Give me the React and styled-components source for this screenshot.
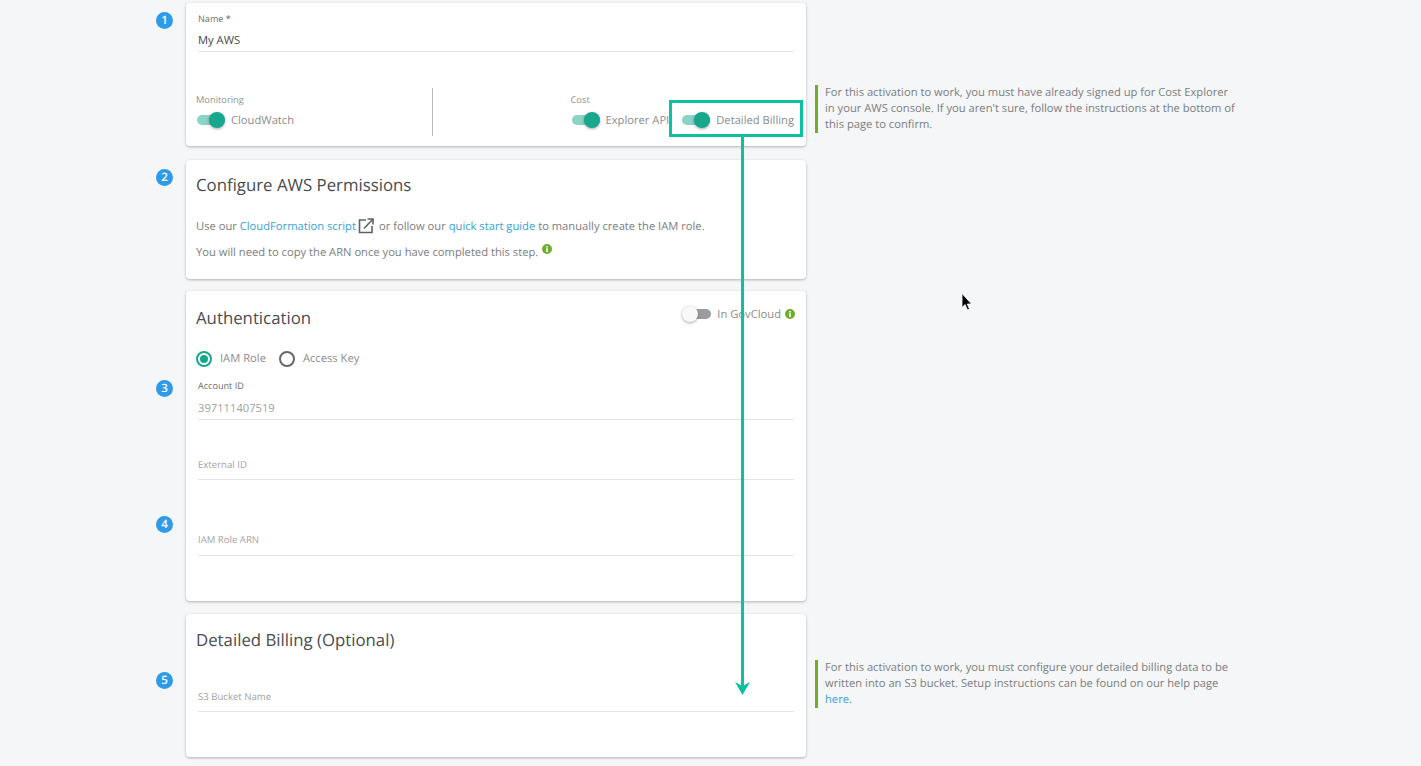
import React from "react";
import styled, { createGlobalStyle } from "styled-components";

const GlobalStyle = createGlobalStyle`
  html, body {
    margin: 0;
    padding: 0;
    background: #f5f6f8;
    font-family: "Open Sans", "Liberation Sans", sans-serif;
    color: #6f7275;
    text-rendering: geometricPrecision;
  }
  * {
    box-sizing: border-box;
  }
`;

const TEAL = "#17a78d";
const ANNOTATION = "#0cc0a2";
const BLUE = "#2f9be8";
const LINK = "#3aa3d4";
const GREEN = "#70ad2c";

const Page = styled.div`
  position: relative;
  width: 1421px;
  height: 766px;
  overflow: hidden;
  padding-top: 3px;
`;

const Step = styled.section`
  display: grid;
  grid-template-columns: 156px 30px 620px 1fr;
  height: ${({ $height }) => $height}px;
  margin-bottom: ${({ $gap }) => $gap}px;
`;

const BadgeColumn = styled.div`
  grid-column: 2;
  display: flex;
  flex-direction: column;
  align-items: flex-start;
`;

const Badge = styled.div`
  width: 17px;
  height: 17px;
  margin-top: ${({ $top }) => $top}px;
  border-radius: 50%;
  background: ${BLUE};
  color: #fff;
  font-size: 11.5px;
  font-weight: 600;
  line-height: 17px;
  text-align: center;
`;

const Card = styled.div`
  background: #fff;
  border-radius: 4px;
  box-shadow: 0 1px 3px rgba(0, 0, 0, 0.28);
  padding: ${({ $top }) => $top || 0}px 12px 0 10px;
  height: 100%;
`;

const Field = styled.div`
  margin-left: 2px;
  height: ${({ $height }) => $height}px;
  margin-top: ${({ $top }) => $top || 0}px;
  border-bottom: 1px solid #e4e5e7;
  display: flex;
  flex-direction: column;
  justify-content: flex-end;
`;

const FieldLabel = styled.label`
  font-size: ${({ $small }) => ($small ? 9.1 : 9.6)}px;
  line-height: 14px;
  color: ${({ $small }) => ($small ? "#6a6d70" : "#a0a2a5")};
  margin-bottom: ${({ $small, $bottom }) => $bottom || ($small ? 7 : 7)}px;
`;

const FieldValue = styled.div`
  font-size: 11.2px;
  line-height: 18px;
  margin-bottom: 1px;
  color: ${({ $muted }) => ($muted ? "#a0a2a5" : "#45484b")};
`;

const ToggleBar = styled.div`
  display: flex;
  margin-top: 36px;
  height: 48px;
`;

const ToggleGroup = styled.div`
  width: ${({ $width }) => $width}px;
  padding-left: ${({ $pad }) => $pad || 0}px;
  border-right: ${({ $divider }) => ($divider ? "1px solid #b9babc" : "none")};
`;

const GroupLabel = styled.div`
  font-size: 9.3px;
  line-height: 14px;
  margin-top: 5px;
  margin-bottom: 5px;
  color: #8f9194;
`;

const ToggleRow = styled.div`
  display: flex;
  align-items: center;
  gap: ${({ $gap }) => $gap || 0}px;
  margin-left: 1px;
`;

const ToggleItem = styled.div`
  display: flex;
  align-items: center;
  gap: 6px;
  font-size: 11.2px;
  line-height: 18px;
  color: #8b8d90;
  white-space: nowrap;
`;

const Track = styled.span`
  position: relative;
  display: block;
  width: 28px;
  height: 10px;
  margin-top: -2px;
  border-radius: 5px;
  background: ${({ $on }) => ($on ? "#8bd3c4" : "#9b9c9e")};
`;

const Knob = styled.span`
  position: absolute;
  top: -3px;
  left: ${({ $on }) => ($on ? 12 : -1)}px;
  width: 16px;
  height: 16px;
  border-radius: 50%;
  background: ${({ $on }) => ($on ? TEAL : "#f8f8f8")};
  box-shadow: 0 1px 3px rgba(0, 0, 0, 0.35);
`;

const Title = styled.h2`
  margin: 0;
  font-size: 16.8px;
  font-weight: 400;
  line-height: 24px;
  color: #484b4e;
`;

const Paragraph = styled.p`
  margin: ${({ $top }) => $top}px 0 0;
  font-size: 11.2px;
  line-height: 18px;
  color: #7b7e81;
`;

const TextLink = styled.a`
  color: ${LINK};
  text-decoration: none;
`;

const InfoDot = styled.span`
  display: inline-block;
  position: relative;
  top: ${({ $shift }) => $shift || 0}px;
  width: 10px;
  height: 10px;
  margin-left: ${({ $left }) => $left || 0}px;
  line-height: 0;
`;

const HeaderRow = styled.div`
  display: flex;
  justify-content: space-between;
  align-items: flex-start;
`;

const GovToggle = styled(ToggleItem)`
  margin-top: 0;
  margin-right: -1px;
`;

const RadioRow = styled.div`
  display: flex;
  align-items: center;
  gap: 13px;
  margin-top: 20px;
  font-size: 11.2px;
  line-height: 18px;
  color: #8b8d90;
`;

const RadioItem = styled.div`
  display: flex;
  align-items: center;
  gap: 8px;
`;

const RadioCircle = styled.span`
  display: flex;
  align-items: center;
  justify-content: center;
  width: 16px;
  height: 16px;
  border-radius: 50%;
  border: 2px solid ${({ $on }) => ($on ? TEAL : "#66686b")};

  &::after {
    content: "";
    display: ${({ $on }) => ($on ? "block" : "none")};
    width: 8px;
    height: 8px;
    border-radius: 50%;
    background: ${TEAL};
  }
`;

const Note = styled.aside`
  align-self: start;
  margin: ${({ $top }) => $top}px 0 0 9px;
  width: 425px;
  padding-left: 7px;
  border-left: 3px solid ${GREEN};
  font-size: 11.2px;
  line-height: 16px;
  color: #7b7e81;
`;

const Highlight = styled.div`
  position: absolute;
  left: 669px;
  top: 100px;
  width: 134px;
  height: 37px;
  border: 3px solid ${ANNOTATION};
`;

const Arrow = styled.svg`
  position: absolute;
  left: 733px;
  top: 136px;
`;

const Cursor = styled.svg`
  position: absolute;
  left: 960px;
  top: 292px;
`;

const Info = ({ shift, left }) => (
  <InfoDot $shift={shift} $left={left}>
    <svg width="10" height="10" viewBox="0 0 10 10">
      <circle cx="5" cy="5" r="5" fill={GREEN} />
      <rect x="4.2" y="4.2" width="1.6" height="3.8" fill="#fff" />
      <rect x="4.2" y="2" width="1.6" height="1.5" fill="#fff" />
    </svg>
  </InfoDot>
);

const Toggle = ({ on }) => (
  <Track $on={on}>
    <Knob $on={on} />
  </Track>
);

const ExternalIcon = () => (
  <svg
    width="16"
    height="16"
    viewBox="0 0 16 16"
    fill="none"
    stroke="#5f6164"
    strokeWidth="1.6"
    style={{ verticalAlign: "-4px", margin: "0 5px 0 2px" }}
  >
    <path d="M8 2H1.5v12.5H14V8" />
    <path d="M6 10.5 14.5 1.5M9.5 1h5.5v5.5" />
  </svg>
);

export default function App() {
  return (
    <Page>
      <GlobalStyle />

      <Step $height={143} $gap={14}>
        <BadgeColumn>
          <Badge $top={9}>1</Badge>
        </BadgeColumn>
        <Card>
          <Field $height={49} $top={0}>
            <FieldLabel $small $bottom={6}>Name *</FieldLabel>
            <FieldValue>My AWS</FieldValue>
          </Field>
          <ToggleBar>
            <ToggleGroup $width={237} $divider>
              <GroupLabel>Monitoring</GroupLabel>
              <ToggleRow>
                <ToggleItem>
                  <Toggle on />
                  CloudWatch
                </ToggleItem>
              </ToggleRow>
            </ToggleGroup>
            <ToggleGroup $pad={138}>
              <GroupLabel>Cost</GroupLabel>
              <ToggleRow $gap={13}>
                <ToggleItem>
                  <Toggle on />
                  Explorer API
                </ToggleItem>
                <ToggleItem>
                  <Toggle on />
                  Detailed Billing
                </ToggleItem>
              </ToggleRow>
            </ToggleGroup>
          </ToggleBar>
        </Card>
        <Note $top={82}>
          For this activation to work, you must have already signed up for Cost Explorer in your AWS
          console. If you aren't sure, follow the instructions at the bottom of this page to confirm.
        </Note>
      </Step>

      <Step $height={119} $gap={12}>
        <BadgeColumn>
          <Badge $top={9}>2</Badge>
        </BadgeColumn>
        <Card $top={13}>
          <Title>Configure AWS Permissions</Title>
          <Paragraph $top={21}>
            Use our <TextLink>CloudFormation script</TextLink>
            <ExternalIcon />
            or follow our <TextLink>quick start guide</TextLink> to manually create the IAM role.
          </Paragraph>
          <Paragraph $top={8}>
            You will need to copy the ARN once you have completed this step.
            <Info shift={-2} left={4} />
          </Paragraph>
        </Card>
      </Step>

      <Step $height={310} $gap={13}>
        <BadgeColumn>
          <Badge $top={89}>3</Badge>
          <Badge $top={119}>4</Badge>
        </BadgeColumn>
        <Card $top={15}>
          <HeaderRow>
            <Title>Authentication</Title>
            <GovToggle>
              <Toggle />
              <span>In GovCloud</span>
              <Info shift={-1} left={-2} />
            </GovToggle>
          </HeaderRow>
          <RadioRow>
            <RadioItem>
              <RadioCircle $on />
              IAM Role
            </RadioItem>
            <RadioItem>
              <RadioCircle />
              Access Key
            </RadioItem>
          </RadioRow>
          <Field $height={44} $top={8}>
            <FieldLabel $small>Account ID</FieldLabel>
            <FieldValue $muted>397111407519</FieldValue>
          </Field>
          <Field $height={60}>
            <FieldLabel>External ID</FieldLabel>
          </Field>
          <Field $height={76}>
            <FieldLabel $bottom={8}>IAM Role ARN</FieldLabel>
          </Field>
        </Card>
      </Step>

      <Step $height={143} $gap={0}>
        <BadgeColumn>
          <Badge $top={58}>5</Badge>
        </BadgeColumn>
        <Card $top={14}>
          <Title>Detailed Billing (Optional)</Title>
          <Field $height={60}>
            <FieldLabel>S3 Bucket Name</FieldLabel>
          </Field>
        </Card>
        <Note $top={46}>
          For this activation to work, you must configure your detailed billing data to be written
          into an S3 bucket. Setup instructions can be found on our help page{" "}
          <TextLink>here</TextLink>.
        </Note>
      </Step>

      <Highlight />
      <Arrow width="20" height="562" viewBox="0 0 20 562">
        <rect x="8" y="0" width="3" height="552" fill={ANNOTATION} />
        <path d="M2 546 L9.5 550 L17 546 L9.5 559 Z" fill={ANNOTATION} />
      </Arrow>
      <Cursor width="14" height="20" viewBox="0 0 14 20">
        <path
          d="M2 1.5 V15.5 L5 12.5 L7.5 18 L9.5 17 L7.2 12 H11.5 Z"
          fill="#000"
          stroke="#fff"
          strokeWidth="0.8"
        />
      </Cursor>
    </Page>
  );
}
